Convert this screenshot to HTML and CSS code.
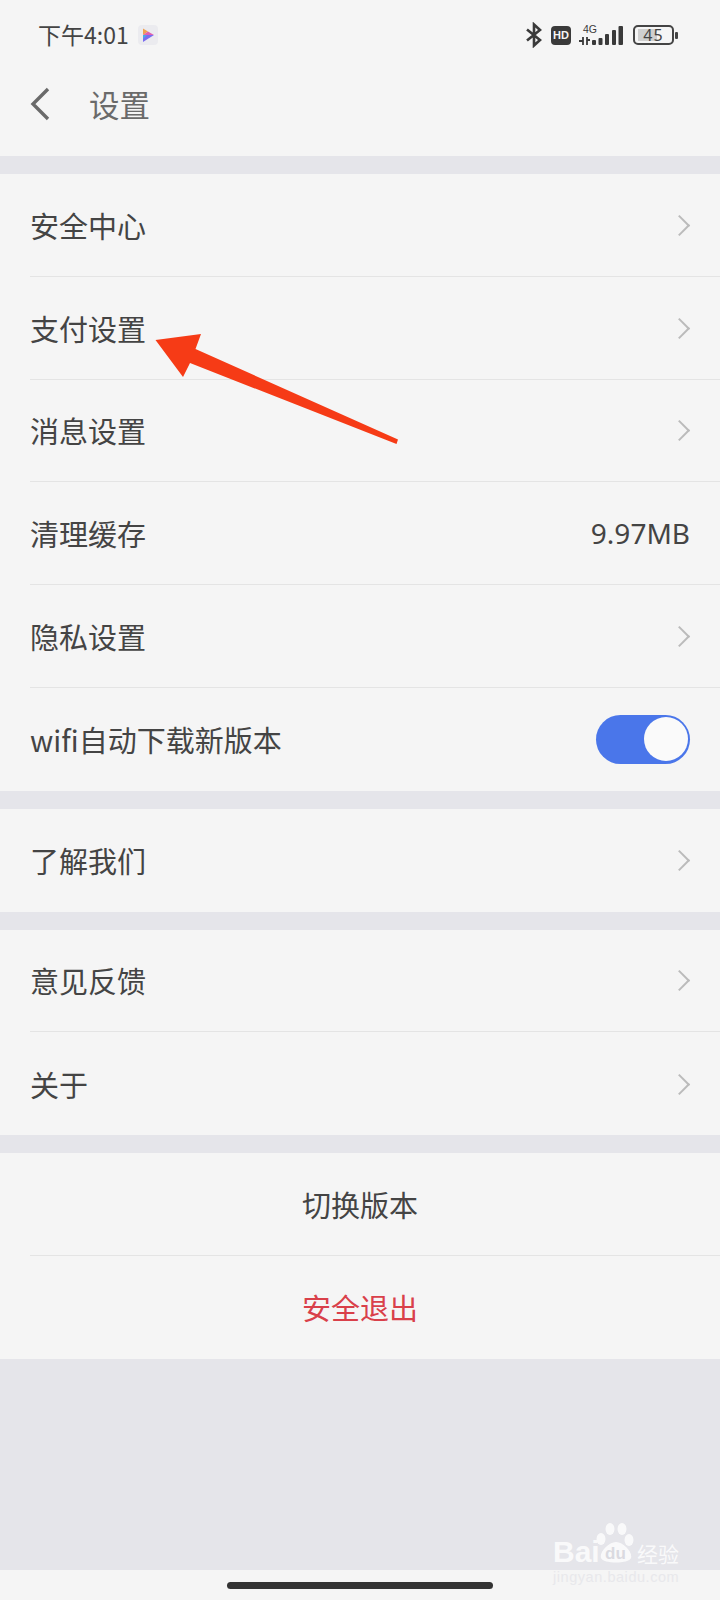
FILE: index.html
```html
<!DOCTYPE html>
<html lang="zh-CN">
<head>
<meta charset="UTF-8">
<meta name="viewport" content="width=device-width, initial-scale=1.0">
<title>设置</title>
<link rel="stylesheet" href="styles.css">
</head>
<body>

<div class="page">
  <div class="status-bar">
    <div class="status-left">
      <span class="status-time">下午4:01</span>
      <svg class="app-icon" width="20" height="20" viewBox="0 0 20 20">
        <rect width="20" height="20" rx="4" fill="#ebebef"/>
        <path d="M5 3.5 L10 6.5 L5 10 Z" fill="#f0a050"/>
        <path d="M5 10 L10 6.5 L16 10 L5 10 Z" fill="#e060b0"/>
        <path d="M5 10 L16 10 L5 17 Z" fill="#7a6cf0"/>
        <path d="M5 10 L9 10 L5 14 Z" fill="#48a8e8"/>
      </svg>
    </div>
    <div class="status-right">
      <svg width="18" height="26" viewBox="0 0 18 26" fill="none" stroke="#3a3a3a" stroke-width="2.6">
        <path d="M2 7.5 L15 18 L9 23.5 V2.5 L15 8 L2 18.5"/>
      </svg>
      <div class="hd-badge">HD</div>
      <svg width="44" height="22" viewBox="0 0 44 22">
        <text x="4" y="9" font-size="10.5" fill="#3a3a3a" font-family="Liberation Sans, sans-serif">4G</text>
        <path d="M0 17 H4 M4 13 V21 M8 13 V21 M8 16 H11" stroke="#3a3a3a" stroke-width="1.8" fill="none"/>
        <rect x="13" y="16" width="4" height="5" rx="1" fill="#3a3a3a"/>
        <rect x="19.5" y="14" width="4" height="7" rx="1" fill="#3a3a3a"/>
        <rect x="26" y="10" width="4" height="11" rx="1" fill="#3a3a3a"/>
        <rect x="33" y="6" width="4" height="15" rx="1" fill="#3a3a3a"/>
        <rect x="39.5" y="2" width="4.5" height="19" rx="1" fill="#3a3a3a"/>
      </svg>
      <div class="battery">
        <div class="battery-body">
          <div class="battery-fill"></div>
          <span class="battery-num">45</span>
        </div>
        <div class="battery-nub"></div>
      </div>
    </div>
  </div>

  <div class="title-bar">
    <svg class="back-icon" width="20" height="34" viewBox="0 0 20 34" fill="none" stroke="#6a6a6a" stroke-width="3.4">
      <path d="M18 2 L3 17 L18 32"/>
    </svg>
    <span class="title">设置</span>
  </div>

  <div class="group">
    <div class="row"><span>安全中心</span><span class="chevron"></span></div>
    <div class="row"><span>支付设置</span><span class="chevron"></span></div>
    <div class="row"><span>消息设置</span><span class="chevron"></span></div>
    <div class="row"><span>清理缓存</span><span class="row-value">9.97MB</span></div>
    <div class="row"><span>隐私设置</span><span class="chevron"></span></div>
    <div class="row"><span>wifi自动下载新版本</span><span class="toggle"><span class="toggle-knob"></span></span></div>
  </div>

  <div class="group">
    <div class="row"><span>了解我们</span><span class="chevron"></span></div>
  </div>

  <div class="group">
    <div class="row"><span>意见反馈</span><span class="chevron"></span></div>
    <div class="row"><span>关于</span><span class="chevron"></span></div>
  </div>

  <div class="group">
    <div class="row row-center"><span>切换版本</span></div>
    <div class="row row-center row-danger"><span>安全退出</span></div>
  </div>

  <div class="filler"></div>

  <div class="home-bar">
    <div class="home-pill"></div>
  </div>

  <svg class="arrow" width="720" height="1600" viewBox="0 0 720 1600">
    <polygon points="155.5,340 201,334 195.5,349 398,439.5 396.5,444 190,363 183,377" fill="#f63b16"/>
  </svg>

  <div class="watermark">
    <svg class="paw" width="40" height="40" viewBox="0 0 40 40" fill="#fff">
      <ellipse cx="14" cy="6" rx="4.5" ry="6"/>
      <ellipse cx="26" cy="6" rx="4.5" ry="6"/>
      <ellipse cx="5" cy="16" rx="4.5" ry="6"/>
      <ellipse cx="33" cy="17" rx="4.5" ry="6"/>
      <path d="M20 19 C28 19 37 30 35 35 C33 41 7 41 5 35 C3 30 12 19 20 19 Z"/>
    </svg>
    <span class="wm-bai">Bai</span>
    <span class="wm-du">du</span>
    <span class="wm-jy">经验</span>
    <div class="wm-url">jingyan.baidu.com</div>
  </div>
</div>

</body>
</html>
```

FILE: styles.css
```css
body {
  margin: 0;
  padding: 0;
  background: #f5f5f5;
  font-family: "Liberation Sans", "Noto Sans CJK SC", sans-serif;
  color: #3a3a3a;
}

.page {
  position: relative;
  width: 720px;
  height: 1600px;
  overflow: hidden;
  display: flex;
  flex-direction: column;
}

.status-bar {
  height: 70px;
  padding: 0 42px 0 38px;
  display: flex;
  align-items: center;
  justify-content: space-between;
  flex-shrink: 0;
}

.status-left {
  display: flex;
  align-items: center;
  gap: 9px;
}

.status-time {
  margin-bottom: 3px;
  font-family: "Noto Sans CJK SC", sans-serif;
  font-size: 23px;
  color: #444;
}

.app-icon {
  margin-bottom: 1px;
}

.status-right {
  display: flex;
  align-items: center;
  gap: 8px;
}

.hd-badge {
  width: 20px;
  height: 19px;
  background: #3a3a3a;
  border-radius: 4px;
  color: #f5f5f5;
  font-size: 11px;
  font-weight: bold;
  line-height: 19px;
  text-align: center;
}

.battery {
  display: flex;
  align-items: center;
  gap: 1px;
  margin-left: 2px;
}

.battery-body {
  position: relative;
  width: 41px;
  height: 20px;
  box-sizing: border-box;
  border: 2px solid #444;
  border-radius: 5px;
  text-align: center;
}

.battery-fill {
  position: absolute;
  left: 3px;
  top: 2px;
  bottom: 2px;
  width: 19px;
  background: #cfcfcf;
}

.battery-num {
  position: relative;
  display: block;
  font-family: "Noto Sans", sans-serif;
  font-size: 16px;
  line-height: 16px;
  letter-spacing: 1px;
  color: #444;
}

.battery-nub {
  width: 3px;
  height: 7px;
  background: #444;
  border-radius: 1px;
}

.title-bar {
  height: 86px;
  padding: 0 0 18px 30px;
  box-sizing: border-box;
  display: flex;
  align-items: center;
  flex-shrink: 0;
}

.back-icon {
  margin-right: 39px;
}

.title {
  font-family: "Noto Sans CJK SC", sans-serif;
  font-size: 30.5px;
  color: #6a6a6a;
}

.group {
  margin-top: 18px;
  background: #f5f5f5;
}

.title-bar + .group {
  box-shadow: 0 -18px 0 #e5e5ea;
}

.group + .group {
  margin-top: 0;
  border-top: 18.3px solid #e5e5ea;
}

.row {
  height: 102.8px;
  margin-left: 30px;
  padding-right: 30px;
  box-sizing: border-box;
  border-bottom: 1px solid #e4e4e4;
  display: flex;
  align-items: center;
  justify-content: space-between;
  font-family: "Noto Sans CJK SC", sans-serif;
  font-size: 29px;
  color: #444;
}

.row:last-child {
  border-bottom: none;
}

.row-center {
  justify-content: center;
}

.row-danger {
  color: #d9404a;
}

.row-value {
  font-family: "Noto Sans", sans-serif;
  font-size: 28px;
}

.chevron {
  width: 15px;
  height: 15px;
  margin-top: 1px;
  margin-right: 3px;
  box-sizing: border-box;
  border-top: 2px solid #bbb;
  border-right: 2px solid #bbb;
  transform: rotate(45deg);
}

.toggle {
  width: 94px;
  height: 49px;
  box-sizing: border-box;
  padding: 2.5px 2px;
  background: #4a76ea;
  border-radius: 25px;
  display: flex;
  justify-content: flex-end;
}

.toggle-knob {
  width: 44px;
  height: 44px;
  background: #fafafa;
  border-radius: 50%;
}

.filler {
  flex: 1;
  background: #e5e5ea;
}

.home-bar {
  height: 30px;
  display: flex;
  align-items: center;
  justify-content: center;
  flex-shrink: 0;
}

.home-pill {
  width: 266px;
  height: 7px;
  background: #333;
  border-radius: 4px;
}

.arrow {
  position: absolute;
  left: 0;
  top: 0;
}

.watermark {
  position: absolute;
  left: 553px;
  top: 1523px;
  width: 130px;
  height: 60px;
  color: #fff;
  opacity: 0.8;
}

.paw {
  position: absolute;
  left: 43px;
  top: 0;
}

.wm-bai {
  position: absolute;
  left: 0;
  top: 11px;
  font-size: 30px;
  line-height: 36px;
  font-weight: bold;
}

.wm-du {
  position: absolute;
  left: 52px;
  top: 22px;
  font-size: 17px;
  line-height: 18px;
  font-weight: bold;
  color: #d8d8de;
}

.wm-jy {
  position: absolute;
  left: 84px;
  top: 15px;
  font-family: "Noto Sans CJK SC", sans-serif;
  font-size: 21px;
  line-height: 30px;
  white-space: nowrap;
}

.wm-url {
  position: absolute;
  left: 0;
  top: 46px;
  font-size: 14.5px;
  letter-spacing: 0.55px;
  white-space: nowrap;
  color: #e6e6ea;
}
```
